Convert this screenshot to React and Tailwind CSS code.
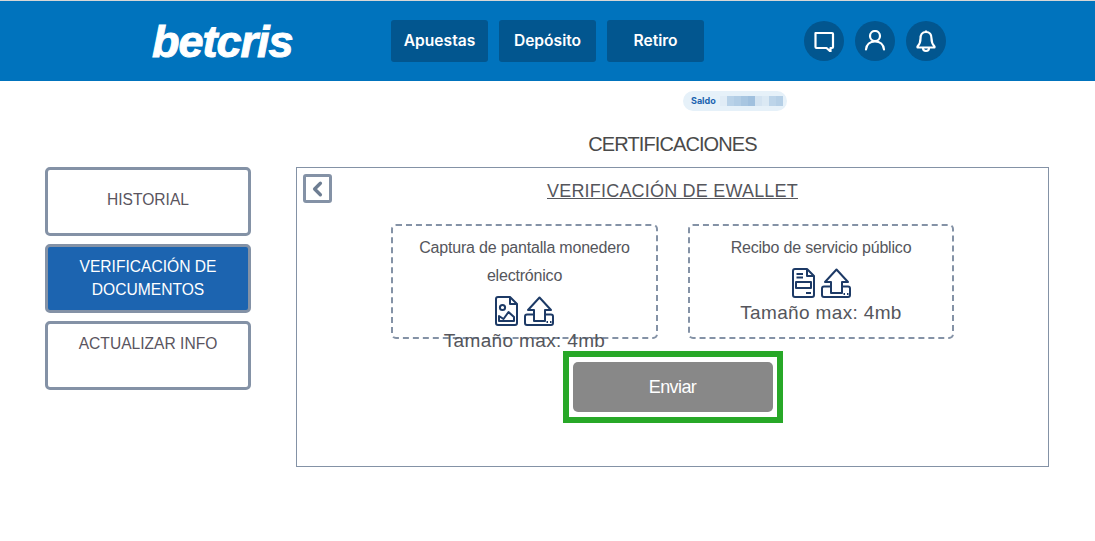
import React from "react";
import { ChevronLeft } from "lucide-react";

const NAV = ["Apuestas", "Depósito", "Retiro"];
const SIDE = [
  { label: "HISTORIAL", cls: "bg-white text-[#5a5560] pt-[18px]" },
  { label: "VERIFICACIÓN DE DOCUMENTOS", cls: "bg-[#1c64b0] text-white pt-[8px] px-[20px]" },
  { label: "ACTUALIZAR INFO", cls: "bg-white text-[#5a5560] pt-[8px]" },
];
const BLUR = [
  "bg-[#e0ecf6]",
  "bg-[#b9d2e8]",
  "bg-[#b2cde5]",
  "bg-[#a8c6e1]",
  "bg-[#a0c0de]",
  "bg-[#d3e3f1]",
  "bg-[#dbe9f4]",
  "bg-[#bcd4e9]",
  "bg-[#b5cfe6]",
];

function UploadIcon() {
  return (
    <svg width="30" height="30" viewBox="0 0 30 30" fill="none" stroke="#1d3a66" strokeWidth="2" strokeLinejoin="round">
      <path d="M10 18.500H3Q1 18.500 1 20.500V27Q1 29 3 29H27Q29 29 29 27V20.500Q29 18.500 27 18.500H21" />
      <path d="M10 25V14H4L15.500 1.500L27 14H21V25Z" fill="#fff" />
      <path d="M22.500 26H24M26 26H27.500" />
    </svg>
  );
}

function ImageDocIcon() {
  return (
    <svg width="23" height="30" viewBox="0 0 23 30" fill="none" stroke="#1d3a66" strokeWidth="2" strokeLinejoin="round">
      <path d="M3 1H15L22 8V27Q22 29 20 29H3Q1 29 1 27V3Q1 1 3 1Z" />
      <path d="M15 1V8H22" />
      <circle cx="7.500" cy="11.500" r="2.600" />
      <path d="M4 25V20L8.500 23L13.500 16L19 21V25Z" />
    </svg>
  );
}

function FormDocIcon() {
  return (
    <svg width="23" height="30" viewBox="0 0 23 30" fill="none" stroke="#1d3a66" strokeWidth="2" strokeLinejoin="round">
      <path d="M3 1H15L22 8V27Q22 29 20 29H3Q1 29 1 27V3Q1 1 3 1Z" />
      <path d="M15 1V8H22" />
      <path d="M4.500 6H11M4.500 9.500H11" />
      <path d="M4 14H19V20H4Z" />
      <path d="M14 25H19" />
    </svg>
  );
}

function UploadCard({ title, doc, width }) {
  return (
    <div className={`h-[115px] rounded-[5px] border-2 border-dashed border-[#8492a6] px-[20px] text-center ${width}`}>
      <p className="pt-[8px] text-[16px] leading-[28px] tracking-[-0.2px] text-[#55565c]">{title}</p>
      <div className="mt-[6px] flex justify-center gap-[6px]">
        {doc}
        <UploadIcon />
      </div>
      <p className="mt-[1px] whitespace-nowrap text-[19px] leading-[28px] tracking-[0.35px] text-[#55565c]">Tamaño max: 4mb</p>
    </div>
  );
}

export default function App() {
  return (
    <div className="min-h-[541px] bg-white font-['Liberation_Sans',Arial,sans-serif]">
      <header className="flex h-[81px] items-center border-t border-[#d6d6d6] bg-[#0073bd]">
        <span className="ml-[152px] w-[239px] text-[45px] leading-none font-bold tracking-[-1px] text-white italic [-webkit-text-stroke:1px_white]">betcris</span>
        <nav className="flex gap-[11px]">
          {NAV.map((item) => (
            <button key={item} className="h-[42px] w-[97px] rounded-[3px] bg-[#02568f] font-['Inter',sans-serif] text-[15.6px] font-semibold text-white">
              {item}
            </button>
          ))}
        </nav>
        <div className="ml-[100px] flex gap-[11px]">
          <div className="flex h-[40px] w-[40px] items-center justify-center rounded-full bg-[#02568f]">
            <svg width="22" height="22" viewBox="0 -1 22 22" fill="none" stroke="#fff" strokeWidth="2.200" strokeLinejoin="round">
              <path d="M2.500 2H19Q20 2 20 3V16Q20 17 19 17H17.500V20.500L13.500 17H3.500Q2.500 17 2.500 16Z" />
            </svg>
          </div>
          <div className="flex h-[40px] w-[40px] items-center justify-center rounded-full bg-[#02568f]">
            <svg width="22" height="22" viewBox="0 1 22 22" fill="none" stroke="#fff" strokeWidth="2.200" strokeLinecap="round">
              <circle cx="11" cy="7" r="5" />
              <path d="M2 20.500C2.500 15.500 6 12.500 11 12.500S19.500 15.500 20 20.500" />
            </svg>
          </div>
          <div className="flex h-[40px] w-[40px] items-center justify-center rounded-full bg-[#02568f]">
            <svg width="22" height="24" viewBox="0 0 22 24" fill="none" stroke="#fff" strokeWidth="2.200" strokeLinejoin="round">
              <path d="M11 3C7 3 5.500 6 5.500 9.500C5.500 13.500 4.500 15.500 2.500 17.500V18.500H19.500V17.500C17.500 15.500 16.500 13.500 16.500 9.500C16.500 6 15 3 11 3Z" />
              <path d="M11 3V1.500M8 19C8 21 9.500 22 11 22S14 21 14 19" />
            </svg>
          </div>
        </div>
      </header>

      <div className="ml-[683px] mt-[10px] flex h-[20px] w-[104px] items-center rounded-full bg-[#e6f1f9] pl-[8px]">
        <span className="w-[29px] font-['Inter',sans-serif] text-[9px] font-bold text-[#1c64b0]">Saldo</span>
        <div className="flex h-[10px]">
          {BLUR.map((c, i) => (
            <div key={i} className={`h-full w-[7px] ${c}`} />
          ))}
        </div>
      </div>

      <h1 className="ml-[296px] mt-[20px] w-[753px] text-center text-[20px] leading-[26px] font-normal tracking-[-0.9px] text-[#4a4a4a]">CERTIFICACIONES</h1>

      <div className="ml-[45px] mt-[10px] flex gap-[45px]">
        <aside className="flex w-[206px] flex-col gap-[8px]">
          {SIDE.map((s) => (
            <div key={s.label} className={`h-[69px] rounded-[5px] border-[3px] border-[#8492a6] text-center text-[15.600px] leading-[23px] ${s.cls}`}>
              {s.label}
            </div>
          ))}
        </aside>

        <main className="relative h-[300px] w-[753px] border border-[#8492a6]">
          <button className="absolute top-[6px] left-[6px] flex h-[29px] w-[29px] items-center justify-center rounded-[3px] border-[3px] border-[#8492a6] bg-white text-[#6d7d92]">
            <ChevronLeft size={24} strokeWidth={3.5} />
          </button>
          <h2 className="pt-[12px] text-center text-[18px] leading-[22px] tracking-[0.2px] text-[#55565c] underline">VERIFICACIÓN DE EWALLET</h2>
          <div className="mt-[22px] ml-[94px] flex gap-[30px]">
            <UploadCard title="Captura de pantalla monedero electrónico" doc={<ImageDocIcon />} width="w-[267px]" />
            <UploadCard title="Recibo de servicio público" doc={<FormDocIcon />} width="w-[266px]" />
          </div>
          <div className="mt-[12px] flex justify-center">
            <div className="box-border flex h-[72px] w-[220px] items-center justify-center border-[6px] border-[#28a828] bg-white">
              <button className="h-[50px] w-[200px] rounded-[5px] bg-[#888888] text-[18px] tracking-[-0.6px] text-white">Enviar</button>
            </div>
          </div>
        </main>
      </div>
    </div>
  );
}
